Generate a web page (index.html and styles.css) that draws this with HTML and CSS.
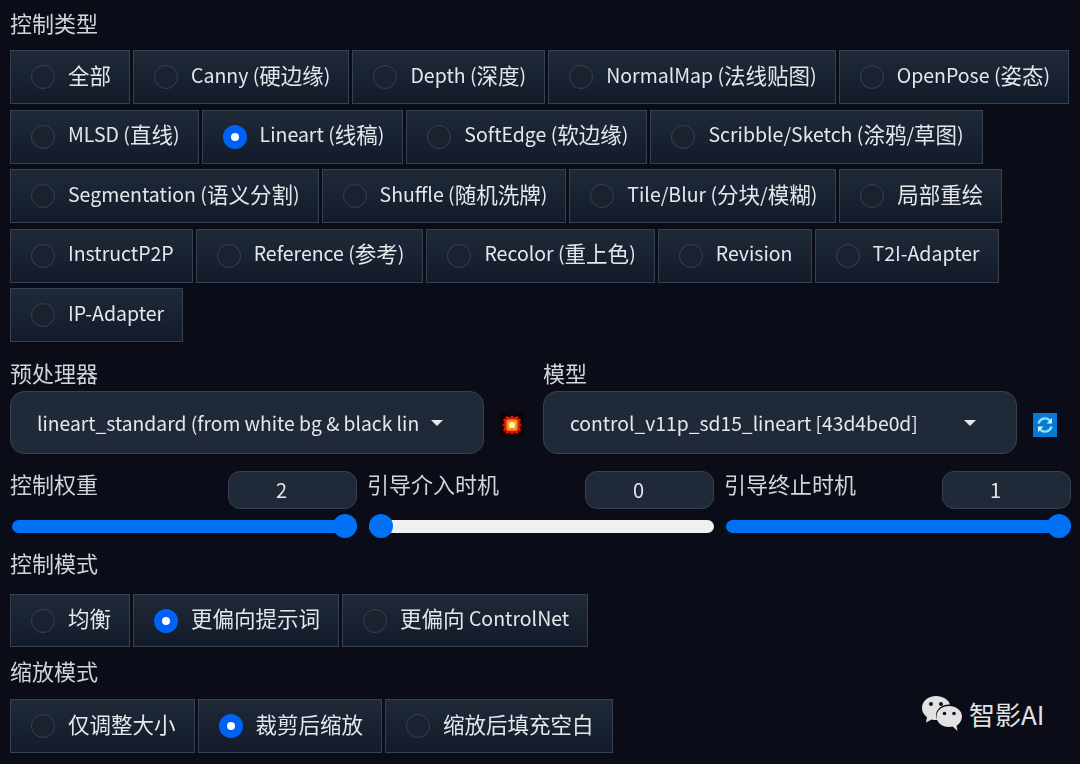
FILE: index.html
```html
<!DOCTYPE html>
<html>
<head>
    <title>ControlNet</title>
    <link rel="stylesheet" href="styles.css">
</head>
<body>
    <div class="page">
        <div class="label type-label">控制类型</div>
        <div class="radio-row">
            <label class="radio-btn"><span class="dot"></span><span class="cn">全部</span></label>
            <label class="radio-btn"><span class="dot"></span>Canny (<span class="cn">硬边缘</span>)</label>
            <label class="radio-btn"><span class="dot"></span>Depth (<span class="cn">深度</span>)</label>
            <label class="radio-btn"><span class="dot"></span>NormalMap (<span class="cn">法线贴图</span>)</label>
            <label class="radio-btn"><span class="dot"></span>OpenPose (<span class="cn">姿态</span>)</label>
        </div>
        <div class="radio-row">
            <label class="radio-btn"><span class="dot"></span>MLSD (<span class="cn">直线</span>)</label>
            <label class="radio-btn"><span class="dot on"></span>Lineart (<span class="cn">线稿</span>)</label>
            <label class="radio-btn"><span class="dot"></span>SoftEdge (<span class="cn">软边缘</span>)</label>
            <label class="radio-btn"><span class="dot"></span>Scribble/Sketch (<span class="cn">涂鸦</span>/<span class="cn">草图</span>)</label>
        </div>
        <div class="radio-row">
            <label class="radio-btn"><span class="dot"></span>Segmentation (<span class="cn">语义分割</span>)</label>
            <label class="radio-btn"><span class="dot"></span>Shuffle (<span class="cn">随机洗牌</span>)</label>
            <label class="radio-btn"><span class="dot"></span>Tile/Blur (<span class="cn">分块</span>/<span class="cn">模糊</span>)</label>
            <label class="radio-btn"><span class="dot"></span><span class="cn">局部重绘</span></label>
        </div>
        <div class="radio-row">
            <label class="radio-btn"><span class="dot"></span>InstructP2P</label>
            <label class="radio-btn"><span class="dot"></span>Reference (<span class="cn">参考</span>)</label>
            <label class="radio-btn"><span class="dot"></span>Recolor (<span class="cn">重上色</span>)</label>
            <label class="radio-btn"><span class="dot"></span>Revision</label>
            <label class="radio-btn"><span class="dot"></span>T2I-Adapter</label>
        </div>
        <div class="radio-row">
            <label class="radio-btn"><span class="dot"></span>IP-Adapter</label>
        </div>

        <div class="select-row">
            <div class="select-col">
                <div class="label">预处理器</div>
                <div class="select-line">
                    <div class="select">
                        <span class="select-text">lineart_standard (from white bg &amp; black lin</span>
                        <span class="caret"></span>
                    </div>
                    <svg class="tool-icon" viewBox="0 0 24 24">
                        <rect width="24" height="24" fill="#120404"/>
                        <polygon fill="#e0140a" points="12,2 14,4.500 18,3 18.500,5.500 21,6 19.500,10 22,12 19.500,14 21,18 18.500,18.500 18,21 14,19.500 12,22 10,19.500 6,21 5.500,18.500 3,18 4.500,14 2,12 4.500,10 3,6 5.500,5.500 6,3 10,4.500"/>
                        <rect x="6.500" y="6.500" width="11" height="11" rx="2" fill="#fb9a12"/>
                        <rect x="9" y="9" width="6" height="6" rx="2" fill="#fff2b0"/>
                    </svg>
                </div>
            </div>
            <div class="select-col">
                <div class="label">模型</div>
                <div class="select-line">
                    <div class="select">
                        <span class="select-text">control_v11p_sd15_lineart [43d4be0d]</span>
                        <span class="caret"></span>
                    </div>
                    <svg class="tool-icon" viewBox="0 0 24 24">
                        <rect width="24" height="24" fill="#0a78d2"/>
                        <path d="M5.500 10.500a6.800 6.800 0 0 1 11.500-3M18.500 13.500a6.800 6.800 0 0 1-11.500 3" fill="none" stroke="#8be4ff" stroke-width="2.400"/>
                        <path d="M19 5v5.500h-5.500zM5 19v-5.500h5.500z" fill="#c8f4ff"/>
                    </svg>
                </div>
            </div>
        </div>

        <div class="slider-row">
            <div class="slider">
                <div class="slider-head">
                    <div class="label">控制权重</div>
                    <div class="num">2</div>
                </div>
                <div class="track full"><span class="thumb end"></span></div>
            </div>
            <div class="slider">
                <div class="slider-head">
                    <div class="label">引导介入时机</div>
                    <div class="num">0</div>
                </div>
                <div class="track"><span class="thumb"></span></div>
            </div>
            <div class="slider">
                <div class="slider-head">
                    <div class="label">引导终止时机</div>
                    <div class="num">1</div>
                </div>
                <div class="track full"><span class="thumb end"></span></div>
            </div>
        </div>

        <div class="label mode-label">控制模式</div>
        <div class="radio-row short">
            <label class="radio-btn"><span class="dot"></span><span class="cn">均衡</span></label>
            <label class="radio-btn"><span class="dot on"></span><span class="cn">更偏向提示词</span></label>
            <label class="radio-btn"><span class="dot"></span><span class="cn">更偏向</span>&nbsp;ControlNet</label>
        </div>

        <div class="label scale-label">缩放模式</div>
        <div class="radio-row">
            <label class="radio-btn"><span class="dot"></span><span class="cn">仅调整大小</span></label>
            <label class="radio-btn"><span class="dot on"></span><span class="cn">裁剪后缩放</span></label>
            <label class="radio-btn"><span class="dot"></span><span class="cn">缩放后填充空白</span></label>
        </div>
    </div>

    <div class="watermark">
        <svg class="wechat" viewBox="0 0 42 38">
            <path fill="#e2e2e2" d="M15 1C7 1 1 6.300 1 13c0 3.800 2 7 5 9.200L5 27.500l5.700-3c1.400.4 2.800.6 4.300.6h1.200C15.500 23.500 15 22 15 20.500 15 14 21 9.500 28 9.500c.6 0 .9 0 1 .1C27.500 4.500 22 1 15 1z"/>
            <path fill="#e2e2e2" d="M28 11c-7 0-12.500 4.500-12.500 10.500S21 32 28 32c1.300 0 2.500-.2 3.700-.5L36.500 36l-1-5.300c3.300-2 5.500-5.300 5.500-9.200C41 15.500 35 11 28 11z"/>
            <circle cx="10" cy="9" r="2" fill="#0b0f19"/>
            <circle cx="20" cy="9" r="2" fill="#0b0f19"/>
            <circle cx="23.500" cy="18.500" r="1.800" fill="#0b0f19"/>
            <circle cx="33" cy="18.500" r="1.800" fill="#0b0f19"/>
        </svg>
        <span>智影AI</span>
    </div>
</body>
</html>
```
FILE: styles.css
```css
html, body {
    margin: 0;
    height: 100%;
    overflow: hidden;
}
body {
    background-color: #0a0c18;
    color: #e5e7eb;
    font-family: "Noto Sans CJK SC", sans-serif;
    font-size: 19.500px;
    position: relative;
}
.page {
    padding: 8px 0 0 10px;
    filter: blur(0.600px);
}
.cn {
    font-size: 21.500px;
}
.label {
    color: #d1d5db;
    font-size: 22px;
    line-height: 28px;
}
.type-label {
    margin-bottom: 14px;
}
.radio-row {
    display: flex;
    gap: 3px;
    margin-bottom: 5.500px;
}
.radio-btn {
    display: flex;
    align-items: center;
    height: 54px;
    box-sizing: border-box;
    padding: 0 18px 5px 20px;
    border: 1px solid #374151;
    background: linear-gradient(to bottom, #1f2937, #131b2a);
    line-height: 1;
    white-space: pre;
}
.dot {
    width: 24px;
    height: 24px;
    box-sizing: border-box;
    margin: 5px 13px 0 0;
    border: 1px solid #374151;
    border-radius: 50%;
    background-color: #1a2230;
}
.dot.on {
    border: 8px solid #0062f5;
    background-color: #fff;
}
.select-row {
    display: flex;
    margin-top: 16px;
}
.select-col {
    width: 533px;
}
.select-line {
    display: flex;
    align-items: center;
    margin-top: 5px;
}
.select {
    display: flex;
    align-items: center;
    justify-content: space-between;
    width: 474px;
    height: 63px;
    box-sizing: border-box;
    padding: 0 40px 0 26px;
    background-color: #1f2937;
    border: 1px solid #374151;
    border-radius: 14px;
}
.select-text {
    font-size: 19.300px;
    white-space: nowrap;
}
.caret {
    border-left: 6px solid transparent;
    border-right: 6px solid transparent;
    border-top: 6px solid #e5e7eb;
}
.tool-icon {
    width: 24px;
    height: 24px;
    margin: 4px 0 0 16px;
}
.slider-row {
    display: flex;
    gap: 10px;
    margin-top: 17px;
}
.slider {
    width: 347px;
}
.slider-head {
    display: flex;
    justify-content: space-between;
}
.slider-head .label {
    margin-top: -2px;
}
.num {
    width: 129px;
    height: 38px;
    box-sizing: border-box;
    padding-right: 22px;
    background-color: #1f2937;
    border: 1px solid #374151;
    border-radius: 12px;
    text-align: center;
    font-size: 20px;
    line-height: 36px;
}
.track {
    position: relative;
    height: 13px;
    margin: 11px 0 0 2px;
    border-radius: 7px;
    background-color: #f0f0f0;
}
.track.full {
    background-color: #0070f5;
}
.thumb {
    position: absolute;
    top: -6px;
    left: 0;
    width: 24px;
    height: 24px;
    border-radius: 50%;
    background-color: #0070f5;
}
.thumb.end {
    left: auto;
    right: 0;
}
.mode-label {
    margin-top: 15px;
    margin-bottom: 18px;
}
.short .radio-btn {
    height: 53px;
}
.scale-label {
    margin-top: 9px;
    margin-bottom: 15px;
}
.watermark {
    position: absolute;
    left: 921px;
    top: 695px;
    display: flex;
    align-items: center;
    gap: 6px;
    color: #e2e2e2;
    font-size: 26px;
    line-height: 38px;
}
.wechat {
    width: 42px;
    height: 38px;
}
```
